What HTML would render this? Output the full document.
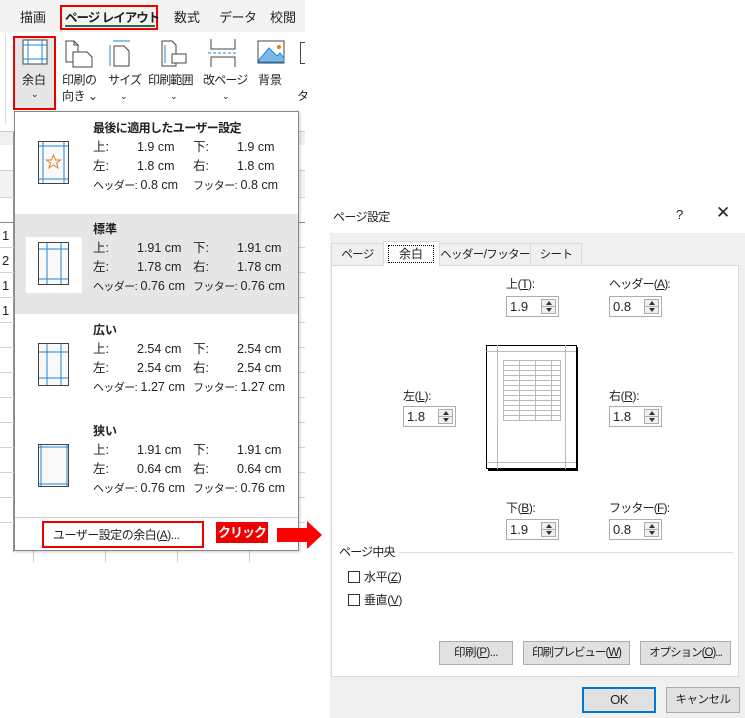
<!DOCTYPE html>
<html><head><meta charset="utf-8"><style>
*{margin:0;padding:0;box-sizing:border-box}
body{width:745px;height:718px;background:#fff;position:relative;overflow:hidden;font-family:"Liberation Sans","Noto Sans CJK JP",sans-serif;color:#222}
.a{position:absolute;white-space:nowrap;line-height:16px}
.f13{font-size:13px}.f12{font-size:12px}
.hl{position:absolute;height:1px;background:#d4d4d4;left:0;width:305px}
.sec .a{font-size:12.5px}
.sec .j{font-size:11px;letter-spacing:-0.6px}
.in{position:absolute;width:53px;height:21px;background:#fff;border:1px solid #adadad;font-size:13px;padding:2px 0 0 3px;line-height:16px}
.in .sp{position:absolute;right:2px;top:2px;width:15px;height:15px;border:1px solid #adadad;background:#f0f0f0}
.in .sp:before{content:"";position:absolute;left:4px;top:1px;border:3px solid transparent;border-bottom:4px solid #333;border-top:0}
.in .sp:after{content:"";position:absolute;left:4px;bottom:1px;border:3px solid transparent;border-top:4px solid #333;border-bottom:0}
.in .sp i{position:absolute;left:0;right:0;top:6px;height:1px;background:#adadad}
.btn{position:absolute;height:24px;background:#e1e1e1;border:1px solid #adadad;font-size:11.5px;letter-spacing:-0.5px;text-align:center;line-height:22px;white-space:nowrap}
.lbl{position:absolute;font-size:12px;letter-spacing:-0.4px;line-height:16px;white-space:nowrap}
u{text-decoration:underline}
.tab{position:absolute;border:1px solid #d9d9d9;border-bottom:0;font-size:11.5px;letter-spacing:-0.6px;text-align:center;line-height:22px;white-space:nowrap}
</style></head><body>
<!-- Excel part -->
<div class="a" style="left:0;top:0;width:305px;height:32px;background:#f3f3f3"></div>
<div class="a f13" style="left:20px;top:10px">描画</div>
<div class="a" style="left:60px;top:5px;width:98px;height:25px;border:2px solid #e00"></div>
<div class="a" style="left:65px;top:10px;font-weight:bold;font-size:12.5px;letter-spacing:-1px">ページ レイアウト</div>
<div class="a" style="left:65px;top:25px;width:90px;height:2px;background:#1e7145"></div>
<div class="a f13" style="left:174px;top:10px">数式</div>
<div class="a f13" style="left:219px;top:10px;letter-spacing:-0.5px">データ</div>
<div class="a f13" style="left:270px;top:10px">校閲</div>
<div class="a" style="left:5px;top:34px;width:1px;height:90px;background:#ddd"></div>
<div class="a" style="left:13px;top:36px;width:43px;height:74px;border:2px solid #e00;background:#e6e6e6"></div>
<svg class="a" style="left:22px;top:39px" width="26" height="26"><rect x="1" y="1" width="24" height="24" fill="#fff" stroke="#444"/><path d="M6 1V25M20 1V25M1 6H25M1 20H25" stroke="#1e88d8"/></svg>
<div class="a f12" style="left:22px;top:72px">余白</div><div class="a" style="left:31px;top:86px;font-size:9px">⌄</div>
<svg class="a" style="left:64px;top:40px" width="30" height="28"><path d="M2 1H10L14 5V22H2Z M10 1V5H14" fill="#fff" stroke="#444"/><path d="M9 12H23L28 17V27H9Z" fill="#fff" stroke="#444"/></svg>
<div class="a f12" style="left:62px;top:72px;line-height:16px;letter-spacing:-0.5px">印刷の<br>向き ⌄</div>
<svg class="a" style="left:108px;top:38px" width="26" height="30"><path d="M5 3H22M2 7V28" stroke="#1e88d8"/><path d="M6 8H16L21 13V28H6Z" fill="#fff" stroke="#444"/></svg>
<div class="a f12" style="left:108px;top:72px;letter-spacing:-0.8px">サイズ</div><div class="a" style="left:120px;top:88px;font-size:9px">⌄</div>
<svg class="a" style="left:160px;top:40px" width="30" height="28"><path d="M2 1H12L16 5V26H2Z" fill="#fff" stroke="#444"/><path d="M5 5V23" stroke="#1e88d8"/><rect x="12" y="14" width="14" height="9" fill="#fff" stroke="#444"/></svg>
<div class="a f12" style="left:148px;top:72px;letter-spacing:-0.8px">印刷範囲</div><div class="a" style="left:170px;top:88px;font-size:9px">⌄</div>
<svg class="a" style="left:208px;top:39px" width="30" height="28"><path d="M3 0V10H27V0M3 28V18H27V28" fill="none" stroke="#444"/><path d="M0 14H30" stroke="#1e88d8" stroke-dasharray="3 2"/></svg>
<div class="a f12" style="left:203px;top:72px;letter-spacing:-0.8px">改ページ</div><div class="a" style="left:222px;top:88px;font-size:9px">⌄</div>
<svg class="a" style="left:257px;top:40px" width="28" height="24"><rect x="1" y="1" width="26" height="22" fill="#fff" stroke="#444"/><path d="M2 20L12 8L20 16L23 13L27 18V22H2Z" fill="#7ab8e8" stroke="#1e88d8"/><circle cx="22" cy="7" r="2" fill="#e8801a"/></svg>
<div class="a f12" style="left:258px;top:72px">背景</div>
<div class="a" style="left:300px;top:42px;width:5px;height:22px;border:1px solid #444;border-right:0"></div>
<div class="a f12" style="left:297px;top:88px">タ</div>
<div class="a" style="left:0;top:131px;width:305px;height:1px;background:#ccc"></div>
<div class="a" style="left:0;top:132px;width:305px;height:13px;background:#f0f0f0"></div>
<div class="a" style="left:0;top:170px;width:305px;height:1px;background:#ccc"></div>
<div class="a" style="left:0;top:171px;width:305px;height:26px;background:#f3f3f3"></div>
<div class="a" style="left:13px;top:132px;width:1px;height:420px;background:#999"></div>
<div class="hl" style="top:197px"></div><div class="hl" style="top:222px;background:#888"></div><div class="hl" style="top:247px"></div><div class="hl" style="top:272px"></div><div class="hl" style="top:297px"></div><div class="hl" style="top:322px"></div><div class="hl" style="top:347px"></div><div class="hl" style="top:372px"></div><div class="hl" style="top:397px"></div><div class="hl" style="top:422px"></div><div class="hl" style="top:447px"></div><div class="hl" style="top:472px"></div><div class="hl" style="top:497px"></div><div class="hl" style="top:522px"></div>
<div class="a" style="left:33px;top:550px;width:1px;height:12px;background:#ccc"></div>
<div class="a" style="left:105px;top:550px;width:1px;height:12px;background:#ccc"></div>
<div class="a" style="left:177px;top:550px;width:1px;height:12px;background:#ccc"></div>
<div class="a" style="left:249px;top:550px;width:1px;height:12px;background:#ccc"></div>
<div class="a f13" style="left:2px;top:228px;color:#222">1</div><div class="a f13" style="left:2px;top:253px">2</div><div class="a f13" style="left:2px;top:278px">1</div><div class="a f13" style="left:2px;top:303px">1</div>
<!-- dropdown -->
<div class="a" style="left:14px;top:111px;width:285px;height:440px;background:#fff;border:1px solid #888;box-shadow:1px 1px 3px rgba(0,0,0,.2)"></div>
<div class="a" style="left:15px;top:214px;width:283px;height:100px;background:#e6e6e6"></div>
<div class="a" style="left:26px;top:237px;width:56px;height:56px;background:#fff"></div>
<div class="a" style="left:15px;top:517px;width:283px;height:1px;background:#ccc"></div>
<svg class="a" style="left:37px;top:140px" width="34" height="46"><rect x="1.5" y="1.5" width="30" height="42" fill="#f9f9f9" stroke="#444"/><path d="M6 2V43M27 2V43M2 6H31M2 39H31" stroke="#1e88d8"/><path d="M16.5 15L18.5 20H23.5L19.5 23L21 28L16.5 25L12 28L13.5 23L9.5 20H14.5Z" fill="none" stroke="#e8801a"/></svg>
<svg class="a" style="left:37px;top:241px" width="34" height="46"><rect x="1.5" y="1.5" width="30" height="42" fill="#f9f9f9" stroke="#444"/><path d="M10 2V43M24 2V43M2 8H31M2 38H31" stroke="#1e88d8"/></svg>
<svg class="a" style="left:37px;top:342px" width="34" height="46"><rect x="1.5" y="1.5" width="30" height="42" fill="#f9f9f9" stroke="#444"/><path d="M10 2V43M24 2V43M2 10H31M2 36H31" stroke="#1e88d8"/></svg>
<svg class="a" style="left:37px;top:443px" width="34" height="46"><rect x="1.5" y="1.5" width="30" height="42" fill="#f9f9f9" stroke="#444"/><path d="M4 2V43M30 2V43M2 4H31M2 41H31" stroke="#1e88d8"/></svg>
<div class="sec">
<div class="a" style="left:93px;top:120px;font-weight:bold;font-size:12px;letter-spacing:-0.6px">最後に適用したユーザー設定</div>
<div class="a" style="left:93px;top:139px">上:</div><div class="a" style="left:137px;top:139px">1.9 cm</div><div class="a" style="left:193px;top:139px">下:</div><div class="a" style="left:237px;top:139px">1.9 cm</div>
<div class="a" style="left:93px;top:158px">左:</div><div class="a" style="left:137px;top:158px">1.8 cm</div><div class="a" style="left:193px;top:158px">右:</div><div class="a" style="left:237px;top:158px">1.8 cm</div>
<div class="a" style="left:93px;top:177px"><span class="j">ヘッダー:</span> 0.8 cm</div><div class="a" style="left:193px;top:177px"><span class="j">フッター:</span> 0.8 cm</div>
<div class="a" style="left:93px;top:221px;font-weight:bold;font-size:12px">標準</div>
<div class="a" style="left:93px;top:240px">上:</div><div class="a" style="left:137px;top:240px">1.91 cm</div><div class="a" style="left:193px;top:240px">下:</div><div class="a" style="left:237px;top:240px">1.91 cm</div>
<div class="a" style="left:93px;top:259px">左:</div><div class="a" style="left:137px;top:259px">1.78 cm</div><div class="a" style="left:193px;top:259px">右:</div><div class="a" style="left:237px;top:259px">1.78 cm</div>
<div class="a" style="left:93px;top:278px"><span class="j">ヘッダー:</span> 0.76 cm</div><div class="a" style="left:193px;top:278px"><span class="j">フッター:</span> 0.76 cm</div>
<div class="a" style="left:93px;top:322px;font-weight:bold;font-size:12px">広い</div>
<div class="a" style="left:93px;top:341px">上:</div><div class="a" style="left:137px;top:341px">2.54 cm</div><div class="a" style="left:193px;top:341px">下:</div><div class="a" style="left:237px;top:341px">2.54 cm</div>
<div class="a" style="left:93px;top:360px">左:</div><div class="a" style="left:137px;top:360px">2.54 cm</div><div class="a" style="left:193px;top:360px">右:</div><div class="a" style="left:237px;top:360px">2.54 cm</div>
<div class="a" style="left:93px;top:379px"><span class="j">ヘッダー:</span> 1.27 cm</div><div class="a" style="left:193px;top:379px"><span class="j">フッター:</span> 1.27 cm</div>
<div class="a" style="left:93px;top:423px;font-weight:bold;font-size:12px">狭い</div>
<div class="a" style="left:93px;top:442px">上:</div><div class="a" style="left:137px;top:442px">1.91 cm</div><div class="a" style="left:193px;top:442px">下:</div><div class="a" style="left:237px;top:442px">1.91 cm</div>
<div class="a" style="left:93px;top:461px">左:</div><div class="a" style="left:137px;top:461px">0.64 cm</div><div class="a" style="left:193px;top:461px">右:</div><div class="a" style="left:237px;top:461px">0.64 cm</div>
<div class="a" style="left:93px;top:480px"><span class="j">ヘッダー:</span> 0.76 cm</div><div class="a" style="left:193px;top:480px"><span class="j">フッター:</span> 0.76 cm</div>
</div>
<div class="a" style="left:42px;top:521px;width:162px;height:27px;border:2px solid #e00"></div>
<div class="a" style="left:53px;top:527px;font-size:12px;letter-spacing:-0.5px">ユーザー設定の余白(<u>A</u>)...</div>
<div class="a" style="left:216px;top:522px;width:52px;height:21px;background:#e00;color:#fff;font-weight:bold;font-size:13px;letter-spacing:-1px;text-align:center;line-height:21px">クリック</div>
<svg class="a" style="left:277px;top:520px" width="46" height="30"><path d="M0 8H30V1L45 15L30 29V22H0Z" fill="#f00"/></svg>
<!-- dialog -->
<div class="a" style="left:330px;top:200px;width:415px;height:518px;background:#f0f0f0"></div>
<div class="a" style="left:330px;top:200px;width:415px;height:33px;background:#fff"></div>
<div class="a" style="left:333px;top:209px;font-size:12px;letter-spacing:-0.6px">ページ設定</div>
<div class="a" style="left:676px;top:207px;font-size:13px">?</div>
<div class="a" style="left:716px;top:205px;font-size:17px">✕</div>
<div class="a" style="left:331px;top:265px;width:408px;height:412px;background:#fff;border:1px solid #d9d9d9"></div>
<div class="tab" style="left:331px;top:243px;width:53px;height:23px">ページ</div>
<div class="a" style="left:383px;top:241px;width:57px;height:25px;background:#fff;border:1px solid #d9d9d9;border-bottom:0"></div>
<div class="a" style="left:388px;top:245px;width:46px;height:18px;border:1px dotted #000;font-size:12px;text-align:center;line-height:16px">余白</div>
<div class="tab" style="left:439px;top:243px;width:92px;height:23px">ヘッダー/フッター</div>
<div class="tab" style="left:530px;top:243px;width:52px;height:23px">シート</div>
<div class="lbl" style="left:506px;top:276px">上(<u>T</u>):</div>
<div class="in" style="left:506px;top:296px">1.9<div class="sp"><i></i></div></div>
<div class="lbl" style="left:609px;top:276px;letter-spacing:-0.8px">ヘッダー(<u>A</u>):</div>
<div class="in" style="left:609px;top:296px">0.8<div class="sp"><i></i></div></div>
<div class="lbl" style="left:403px;top:388px">左(<u>L</u>):</div>
<div class="in" style="left:403px;top:406px">1.8<div class="sp"><i></i></div></div>
<div class="lbl" style="left:609px;top:388px">右(<u>R</u>):</div>
<div class="in" style="left:609px;top:406px">1.8<div class="sp"><i></i></div></div>
<div class="lbl" style="left:506px;top:500px">下(<u>B</u>):</div>
<div class="in" style="left:506px;top:519px">1.9<div class="sp"><i></i></div></div>
<div class="lbl" style="left:609px;top:500px;letter-spacing:-0.8px">フッター(<u>F</u>):</div>
<div class="in" style="left:609px;top:519px">0.8<div class="sp"><i></i></div></div>
<svg class="a" style="left:486px;top:345px" width="94" height="127"><rect x="0.5" y="0.5" width="90" height="123" fill="#fff" stroke="#000"/><path d="M91 2V125H2" stroke="#000" stroke-width="2" fill="none"/><path d="M0.5 6.5H90M0.5 117.5H90M11.5 0V124M79.5 0V124" stroke="#bbb"/><g stroke="#bbb"><path d="M17.5 15V76M33.5 15V76M49.5 15V76M65.5 15V76M74.5 15V76"/><path d="M17 15.5H75M17 20.5H75M17 25.5H75M17 30.5H75M17 35.5H75M17 40.5H75M17 45.5H75M17 50.5H75M17 55.5H75M17 60.5H75M17 65.5H75M17 70.5H75M17 75.5H75"/></g></svg>
<div class="lbl" style="left:339px;top:544px;font-size:12px;letter-spacing:-0.8px">ページ中央</div>
<div class="a" style="left:399px;top:552px;width:334px;height:1px;background:#ddd"></div>
<div class="a" style="left:348px;top:571px;width:12px;height:12px;border:1px solid #333;background:#fff"></div>
<div class="lbl" style="left:364px;top:569px">水平(<u>Z</u>)</div>
<div class="a" style="left:348px;top:594px;width:12px;height:12px;border:1px solid #333;background:#fff"></div>
<div class="lbl" style="left:364px;top:592px">垂直(<u>V</u>)</div>
<div class="btn" style="left:439px;top:641px;width:74px">印刷(<u>P</u>)...</div>
<div class="btn" style="left:523px;top:641px;width:107px;letter-spacing:-1px">印刷プレビュー(<u>W</u>)</div>
<div class="btn" style="left:640px;top:641px;width:91px;letter-spacing:-1px">オプション(<u>O</u>)...</div>
<div class="btn" style="left:582px;top:687px;width:74px;height:26px;border:2px solid #0078d7;line-height:22px;font-size:13px">OK</div>
<div class="btn" style="left:666px;top:687px;width:74px;height:26px;line-height:24px">キャンセル</div>
</body></html>
